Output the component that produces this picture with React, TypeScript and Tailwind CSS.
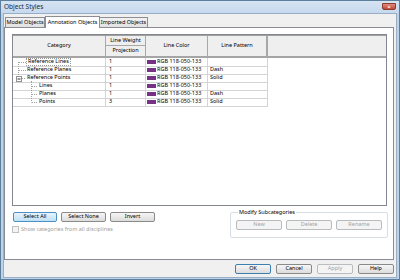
import * as React from "react";

type Row = {
  name: string;
  level: number;
  weight: string;
  pattern: string;
  kind: "first" | "mid" | "parent" | "child" | "lastChild";
};

const rows: Row[] = [
  { name: "Reference Lines", level: 0, weight: "1", pattern: "", kind: "first" },
  { name: "Reference Planes", level: 0, weight: "1", pattern: "Dash", kind: "mid" },
  { name: "Reference Points", level: 0, weight: "1", pattern: "Solid", kind: "parent" },
  { name: "Lines", level: 1, weight: "1", pattern: "", kind: "child" },
  { name: "Planes", level: 1, weight: "1", pattern: "Dash", kind: "child" },
  { name: "Points", level: 1, weight: "3", pattern: "Solid", kind: "lastChild" },
];

function TreeLines({ kind }: { kind: Row["kind"] }) {
  const c = "#a0a0a0";
  const d = "1 1";
  return (
    <svg width="26" height="8" className="shrink-0">
      {kind === "first" && <line x1="5.5" y1="4" x2="5.5" y2="8" stroke={c} strokeDasharray={d} />}
      {kind === "mid" && <line x1="5.5" y1="0" x2="5.5" y2="8" stroke={c} strokeDasharray={d} />}
      {(kind === "first" || kind === "mid") && (
        <line x1="6" y1="4.5" x2="13" y2="4.5" stroke={c} strokeDasharray={d} />
      )}
      {kind === "parent" && (
        <>
          <line x1="5.5" y1="0" x2="5.5" y2="2" stroke={c} strokeDasharray={d} />
          <rect x="3.5" y="2.5" width="5" height="5" fill="#fff" stroke="#919191" />
          <line x1="4.5" y1="5" x2="7.5" y2="5" stroke="#333" />
          <line x1="9" y1="4.5" x2="13" y2="4.5" stroke={c} strokeDasharray={d} />
          <line x1="18.5" y1="7" x2="18.5" y2="8" stroke={c} strokeDasharray={d} />
        </>
      )}
      {(kind === "child" || kind === "lastChild") && (
        <>
          <line x1="18.5" y1="0" x2="18.5" y2={kind === "child" ? 8 : 4.5} stroke={c} strokeDasharray={d} />
          <line x1="19" y1="4.5" x2="25" y2="4.5" stroke={c} strokeDasharray={d} />
        </>
      )}
    </svg>
  );
}

function Btn({
  children,
  w,
  variant = "normal",
}: {
  children: React.ReactNode;
  w: string;
  variant?: "normal" | "hot" | "disabled" | "default";
}) {
  const base = "h-[10px] flex items-center justify-center rounded-[2px] border text-[5.5px] leading-none whitespace-nowrap";
  const styles = {
    normal: "border-[#8a8a8a] bg-gradient-to-b from-[#f6f6f6] to-[#dcdcdc] text-black",
    hot: "border-[#4c8fc3] bg-gradient-to-b from-[#e8f4fc] to-[#bfe0f6] text-black",
    disabled: "border-[#b8bcbf] bg-[#f4f4f4] text-[#a3a3a3]",
    default: "border-[#3c7fb1] bg-gradient-to-b from-[#f6f6f6] to-[#dcdcdc] text-black",
  };
  return <div className={`${base} ${styles[variant]} ${w}`}>{children}</div>;
}

export default function App() {
  return (
    <div
      className="w-[400px] h-[280px] flex flex-col bg-[#bed3ea] border border-[#5d7f9e] overflow-hidden text-black"
      style={{ fontFamily: '"Noto Sans", "Open Sans", sans-serif' }}
    >
      {/* title bar */}
      <div className="h-[12px] flex items-start justify-between bg-gradient-to-b from-[#d6e4f3] to-[#c6d9ee] pl-[3px] pr-[3px]">
        <span className="text-[6.5px] leading-[12px] text-[#1d2a3a]">Object Styles</span>
        <div className="mt-[2px] w-[14px] h-[7px] rounded-b-[2px] bg-gradient-to-b from-[#e08b7e] to-[#c2473a] border border-[#8e3a30] flex items-center justify-center text-white text-[6px] leading-none font-bold">
          ×
        </div>
      </div>

      {/* body */}
      <div className="flex-1 flex flex-col bg-[#f0f0f0] mx-[2px] mb-[1px] border border-[#98aec4]">
        {/* tabs */}
        <div className="h-[13px] flex items-end pl-[1px] text-[5.5px] leading-none whitespace-nowrap">
          <div className="h-[10px] w-[40px] flex items-center justify-center border border-b-0 border-[#8c8e94] bg-gradient-to-b from-[#f2f2f2] to-[#e1e1e1]">
            Model Objects
          </div>
          <div className="relative z-10 -mb-px h-[12px] w-[55px] flex items-center justify-center border border-b-0 border-[#8c8e94] bg-white">
            Annotation Objects
          </div>
          <div className="h-[10px] w-[48px] flex items-center justify-center border border-b-0 border-l-0 border-[#8c8e94] bg-gradient-to-b from-[#f2f2f2] to-[#e1e1e1]">
            Imported Objects
          </div>
        </div>

        {/* panel */}
        <div className="h-[233px] mr-[2px] border border-[#898c95] bg-white pt-[6px] pl-[7px] pr-[6px] flex flex-col">
          {/* table */}
          <div className="h-[172px] border border-[#828790] bg-white flex flex-col">
            <div className="grid grid-cols-[93px_40px_62px_60px_1fr] grid-rows-[10px_10px] bg-[#efefef] text-[5.5px] leading-none border-t border-[#a0a0a0] border-b-2 border-b-[#a5a5a5]">
              <div className="row-span-2 flex items-center justify-center border-r border-[#a8a8a8]">Category</div>
              <div className="flex items-center justify-center border-r border-b border-[#a8a8a8]">Line Weight</div>
              <div className="row-span-2 flex items-center justify-center border-r border-[#a8a8a8]">Line Color</div>
              <div className="row-span-2 flex items-center justify-center border-r-2 border-[#a8a8a8]">Line Pattern</div>
              <div className="row-span-2" />
              <div className="flex items-center justify-center border-r border-[#a8a8a8]">Projection</div>
            </div>
            {rows.map((r, i) => (
              <div key={i} className="grid grid-cols-[93px_40px_62px_60px] h-[8px] text-[5.5px] leading-none">
                <div className="flex items-center border-b border-r border-[#d4d4d4]">
                  <TreeLines kind={r.kind} />
                  <span className={`${r.level === 0 ? "-ml-[12px]" : ""} ${i === 0 ? "outline outline-1 outline-dotted outline-[#9a9a9a] px-[1px]" : ""}`}>
                    {r.name}
                  </span>
                </div>
                <div className="flex items-center pl-[3px] border-b border-r border-[#d4d4d4]">{r.weight}</div>
                <div className="flex items-center gap-[1px] pl-[1px] border-b border-r border-[#d4d4d4]">
                  <span className="w-[9px] h-[4px] bg-[#763285]" />
                  <span>RGB 118-050-133</span>
                </div>
                <div className="flex items-center pl-[2px] border-b border-r border-[#d4d4d4]">{r.pattern}</div>
              </div>
            ))}
          </div>

          {/* below table */}
          <div className="flex justify-between">
            <div className="flex flex-col pl-[1px] pt-[6px]">
              <div className="flex gap-[4px]">
                <Btn w="w-[44px]" variant="hot">Select All</Btn>
                <Btn w="w-[45px]">Select None</Btn>
                <Btn w="w-[45px]">Invert</Btn>
              </div>
              <div className="flex items-center gap-[2px] mt-[4px] -ml-[1px] text-[5.5px] leading-none text-[#a0a0a0]">
                <span className="w-[7px] h-[7px] border border-[#c0c0c0] bg-[#f4f4f4]" />
                Show categories from all disciplines
              </div>
            </div>
            <fieldset className="w-[156px] mt-[3px] -mr-[1px] h-[29px] border border-[#d5dfe5] rounded-[2px] px-[5px] flex">
              <legend className="text-[5.5px] leading-[7px] ml-[2px] px-[1px]">Modify Subcategories</legend>
              <div className="flex gap-[4px] mt-[4px]">
                <Btn w="w-[46px]" variant="disabled">New</Btn>
                <Btn w="w-[46px]" variant="disabled">Delete</Btn>
                <Btn w="w-[46px]" variant="disabled">Rename</Btn>
              </div>
            </fieldset>
          </div>
        </div>

        {/* footer */}
        <div className="flex-1 flex justify-end items-start pt-[4px] pr-[2px] gap-[5px]">
          <Btn w="w-[36px]" variant="default">OK</Btn>
          <Btn w="w-[36px]">Cancel</Btn>
          <Btn w="w-[36px]" variant="disabled">Apply</Btn>
          <Btn w="w-[36px]">Help</Btn>
        </div>
      </div>
    </div>
  );
}
